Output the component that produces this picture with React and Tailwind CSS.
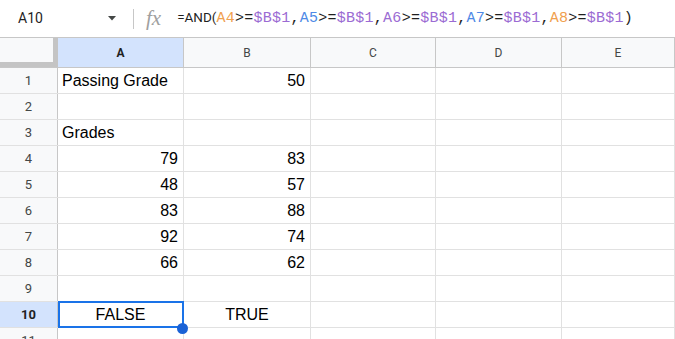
import React from 'react';

const cols = [
  { key: 'A', w: 'w-[126px]' },
  { key: 'B', w: 'w-[127px]' },
  { key: 'C', w: 'w-[125px]' },
  { key: 'D', w: 'w-[126px]' },
  { key: 'E', w: 'flex-1' },
];

// cell values per row: [A, B, alignA, alignB]
const rows = [
  { n: 1, a: 'Passing Grade', b: '50', alignA: 'left', alignB: 'right' },
  { n: 2 },
  { n: 3, a: 'Grades', alignA: 'left' },
  { n: 4, a: '79', b: '83', alignA: 'right', alignB: 'right' },
  { n: 5, a: '48', b: '57', alignA: 'right', alignB: 'right' },
  { n: 6, a: '83', b: '88', alignA: 'right', alignB: 'right' },
  { n: 7, a: '92', b: '74', alignA: 'right', alignB: 'right' },
  { n: 8, a: '66', b: '62', alignA: 'right', alignB: 'right' },
  { n: 9 },
  { n: 10, a: 'FALSE', b: 'TRUE', alignA: 'center', alignB: 'center', active: true },
  { n: 11 },
];

const alignClass = {
  left: 'justify-start pl-[4px]',
  right: 'justify-end pr-[5px]',
  center: 'justify-center',
};

const ORANGE = 'text-[#f0a04e]';
const PURPLE = 'text-[#9b6bd3]';
const BLUE = 'text-[#4e8ae6]';

const refs = [
  ['A4', ORANGE],
  ['A5', BLUE],
  ['A6', PURPLE],
  ['A7', BLUE],
  ['A8', ORANGE],
];

const FormulaBar = () => (
  <div className="flex h-[38px] items-center border-b border-[#c7c7c7] bg-white">
    <div className="flex w-[108px] items-center pl-[18px] font-['Roboto',sans-serif] text-[14px] text-[#1f1f1f]">
      A10
    </div>
    <svg width="8" height="5" viewBox="0 0 8 5" className="mt-[-1px]">
      <path d="M0 0 L8 0 L4 4.5 Z" fill="#444746" />
    </svg>
    <div className="ml-[17px] h-[20px] w-px bg-[#c7c7c7]" />
    <span className="ml-[12px] font-['Liberation_Serif',serif] text-[21px] italic leading-none text-[#a0a0a0]">
      fx
    </span>
    <div className="ml-[16px] flex items-baseline whitespace-nowrap text-[#1f1f1f]">
      <span className="font-['Roboto',sans-serif] text-[13.5px]">=AND(</span>
      <span className="font-['Liberation_Mono',monospace] text-[15px] tracking-[0.25px]">
        {refs.map(([r, c], i) => (
          <React.Fragment key={r}>
            <span className={c}>{r}</span>
            <span>&gt;=</span>
            <span className={PURPLE}>$B$1</span>
            {i < refs.length - 1 ? <span>,</span> : <span>)</span>}
          </React.Fragment>
        ))}
      </span>
    </div>
  </div>
);

const HeaderRow = () => (
  <div className="flex h-[30px] border-b border-[#c7c7c7] font-['Roboto',sans-serif] text-[12px]">
    <div className="flex w-[58px] items-start bg-[#c4c4c4]">
      <div className="h-[24px] w-[53px] bg-[#f8f9fa]" />
    </div>
    {cols.map((c) => (
      <div
        key={c.key}
        className={`${c.w} flex items-center justify-center border-r border-[#c7c7c7] ${
          c.key === 'A' ? 'bg-[#d3e3fd] font-bold text-[#1f1f1f]' : 'bg-[#f8f9fa] text-[#444746]'
        }`}
      >
        {c.key}
      </div>
    ))}
  </div>
);

const Cell = ({ w, value, align, children }) => (
  <div
    className={`${w} relative flex items-end border-r border-[#e1e1e1] pb-[3px] text-[16px] leading-[18px] text-black ${
      alignClass[align] || ''
    }`}
  >
    {value}
    {children}
  </div>
);

const Row = ({ row }) => (
  <div className="flex h-[26px] border-b border-[#e1e1e1]">
    <div
      className={`flex w-[58px] items-center justify-center border-r border-[#c7c7c7] font-['Roboto',sans-serif] text-[13px] ${
        row.active ? 'bg-[#d3e3fd] font-bold text-[#1f1f1f]' : 'bg-[#f8f9fa] text-[#444746]'
      }`}
    >
      {row.n}
    </div>
    <Cell w={cols[0].w} value={row.a} align={row.alignA}>
      {row.active && (
        <>
          <div className="absolute left-0 top-[-1px] h-[27px] w-[126px] border-2 border-[#1a73e8]" />
          <div className="absolute left-[119px] top-[21px] z-10 h-[11px] w-[11px] rounded-full bg-[#1a62d6]" />
        </>
      )}
    </Cell>
    <Cell w={cols[1].w} value={row.b} align={row.alignB} />
    <Cell w={cols[2].w} />
    <Cell w={cols[3].w} />
    <Cell w={cols[4].w} />
  </div>
);

export default function App() {
  return (
    <div className="h-[339px] w-[675px] overflow-hidden bg-white font-['Liberation_Sans',Arial,sans-serif]">
      <FormulaBar />
      <HeaderRow />
      {rows.map((r) => (
        <Row key={r.n} row={r} />
      ))}
    </div>
  );
}
